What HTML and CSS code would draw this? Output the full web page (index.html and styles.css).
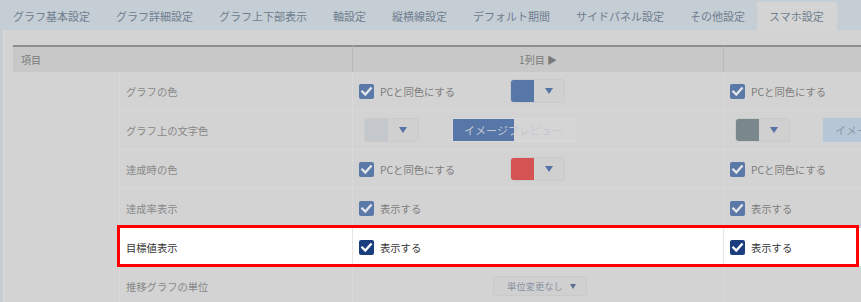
FILE: index.html
```html
<!DOCTYPE html>
<html lang="ja">
<head>
<meta charset="utf-8">
<link rel="stylesheet" href="styles.css">
</head>
<body>
<div class="tabs">
  <div class="tab">グラフ基本設定</div>
  <div class="tab">グラフ詳細設定</div>
  <div class="tab">グラフ上下部表示</div>
  <div class="tab">軸設定</div>
  <div class="tab">縦横線設定</div>
  <div class="tab">デフォルト期間</div>
  <div class="tab">サイドパネル設定</div>
  <div class="tab">その他設定</div>
  <div class="tab active">スマホ設定</div>
</div>
<div class="panel">
  <div class="tablewrap">
    <table class="grid">
      <colgroup><col class="c0"><col class="c1"><col class="c2"><col class="c3"></colgroup>
      <thead>
        <tr><th colspan="2" class="h-item">項目</th><th class="h-col">1列目 ▶</th><th class="h-col"></th></tr>
      </thead>
      <tbody>
        <tr>
          <td rowspan="6" class="blank"></td>
          <td class="label">グラフの色</td>
          <td><div class="pair"><span class="chkline"><span class="cb"><svg viewBox="0 0 15 15"><path d="M3.3 7.6 L6.3 10.6 L11.8 4.4"/></svg></span>PCと同色にする</span><span class="dd"><span class="sw sw-blue"></span><span class="arr"></span></span></div></td>
          <td><span class="chkline"><span class="cb"><svg viewBox="0 0 15 15"><path d="M3.3 7.6 L6.3 10.6 L11.8 4.4"/></svg></span>PCと同色にする</span></td>
        </tr>
        <tr>
          <td class="label">グラフ上の文字色</td>
          <td><div class="colorrow"><span class="dd"><span class="sw sw-light"></span><span class="arr"></span></span><span class="preview">イメージプレビュー</span></div></td>
          <td><div class="colorrow"><span class="dd"><span class="sw sw-dark"></span><span class="arr"></span></span><span class="preview preview-light">イメージプレビュー</span></div></td>
        </tr>
        <tr>
          <td class="label">達成時の色</td>
          <td><div class="pair"><span class="chkline"><span class="cb"><svg viewBox="0 0 15 15"><path d="M3.3 7.6 L6.3 10.6 L11.8 4.4"/></svg></span>PCと同色にする</span><span class="dd"><span class="sw sw-red"></span><span class="arr"></span></span></div></td>
          <td><span class="chkline"><span class="cb"><svg viewBox="0 0 15 15"><path d="M3.3 7.6 L6.3 10.6 L11.8 4.4"/></svg></span>PCと同色にする</span></td>
        </tr>
        <tr>
          <td class="label">達成率表示</td>
          <td><span class="chkline"><span class="cb"><svg viewBox="0 0 15 15"><path d="M3.3 7.6 L6.3 10.6 L11.8 4.4"/></svg></span>表示する</span></td>
          <td><span class="chkline"><span class="cb"><svg viewBox="0 0 15 15"><path d="M3.3 7.6 L6.3 10.6 L11.8 4.4"/></svg></span>表示する</span></td>
        </tr>
        <tr class="lit">
          <td class="label">目標値表示</td>
          <td><span class="chkline"><span class="cb"><svg viewBox="0 0 15 15"><path d="M3.3 7.6 L6.3 10.6 L11.8 4.4"/></svg></span>表示する</span></td>
          <td><span class="chkline"><span class="cb"><svg viewBox="0 0 15 15"><path d="M3.3 7.6 L6.3 10.6 L11.8 4.4"/></svg></span>表示する</span></td>
        </tr>
        <tr>
          <td class="label">推移グラフの単位</td>
          <td class="center"><span class="unit">単位変更なし<span class="arr-s"></span></span></td>
          <td></td>
        </tr>
      </tbody>
    </table>
    <div class="highlight"></div>
  </div>
</div>
</body>
</html>
```

FILE: styles.css
```css
html, body {
  margin: 0;
  padding: 0;
}
body {
  width: 861px;
  height: 302px;
  overflow: hidden;
  background: #c5cdd5;
  font-family: "Noto Sans CJK JP", "Noto Sans", sans-serif;
}
.tabs {
  display: flex;
  height: 30px;
  align-items: flex-end;
  background: #c5cdd5;
}
.tab {
  height: 28px;
  line-height: 28px;
  padding: 0 13px;
  font-size: 11px;
  color: #6e7e8f;
  white-space: nowrap;
  box-sizing: border-box;
}
.tab.active {
  background: #d4d4d4;
  margin-left: -1px;
  padding: 0 13px 0 12px;
  width: 80px;
}
.panel {
  margin-left: 3px;
  border-left: 1px solid #dcdcdc;
  background: #d3d3d3;
  padding: 15px 0 0 9px;
  height: 272px;
  box-sizing: border-box;
  overflow: hidden;
}
.tablewrap {
  position: relative;
  width: 1081px;
}
.grid {
  width: 1081px;
  table-layout: fixed;
  border-collapse: separate;
  border-spacing: 0;
  font-size: 10.3px;
  color: #7c7c7c;
}
.c0 { width: 106px; }
.c1 { width: 233px; }
.c2 { width: 371px; }
.c3 { width: 371px; }
thead th {
  height: 27px;
  box-sizing: border-box;
  border-top: 2px solid #8e8e8e;
  background: #c8c8c8;
  font-weight: normal;
  font-size: 10px;
  color: #7a7a7a;
  padding: 0;
}
.h-item {
  text-align: left;
  padding-left: 8px;
}
.h-col {
  text-align: center;
  border-left: 1px solid #b9b9b9;
}
tbody tr {
  height: 39px;
}
tbody td {
  border-bottom: 1px solid #d9d9d9;
  border-left: 1px solid #d9d9d9;
  padding: 0 6px;
  vertical-align: middle;
  white-space: nowrap;
  overflow: hidden;
}
tbody td.blank {
  border: none;
}
td.label {
  color: #888;
}
td.center {
  text-align: center;
}
.pair {
  display: flex;
  align-items: center;
}
.pair .chkline {
  width: 151px;
}
.chkline {
  display: inline-flex;
  align-items: center;
  gap: 6px;
  vertical-align: middle;
}
.cb {
  width: 15px;
  height: 15px;
  border-radius: 2px;
  background: #5a78a8;
  display: inline-block;
  flex: none;
}
.cb svg {
  display: block;
  width: 15px;
  height: 15px;
  fill: none;
  stroke: #e4e6ea;
  stroke-width: 2.3;
  stroke-linecap: square;
}
.dd {
  display: inline-flex;
  width: 55px;
  height: 24px;
  box-sizing: border-box;
  border: 1px solid #cacaca;
  border-radius: 3px;
  background: #d0d0d0;
  overflow: hidden;
}
.sw {
  width: 23px;
  height: 100%;
  border-radius: 2px 0 0 2px;
}
.sw-blue { background: #5677a8; }
.sw-light { background: #c4c8cc; }
.sw-dark { background: #7a878c; }
.sw-red { background: #d65353; }
.arr {
  flex: 1;
  display: flex;
  align-items: center;
  justify-content: center;
}
.arr::before {
  content: "";
  border-left: 4px solid transparent;
  border-right: 4px solid transparent;
  border-top: 6px solid #5573a5;
}
.colorrow {
  display: flex;
  align-items: center;
  gap: 33px;
  padding-left: 5px;
}
.preview {
  width: 123px;
  height: 24px;
  box-sizing: border-box;
  border: 1px solid #dadada;
  background: linear-gradient(90deg, #5677a8 0, #5677a8 61px, #d5d5d5 61px);
  font-size: 11px;
  line-height: 22px;
  text-align: center;
  color: #c4c9cf;
  flex: none;
}
.preview-light {
  background: #b6c6d7;
  border-color: #b6c6d7;
  color: #8c9aa8;
}
.unit {
  display: inline-flex;
  align-items: center;
  gap: 7px;
  height: 20px;
  box-sizing: border-box;
  padding: 0 10px 0 13px;
  border: 1px solid #cacaca;
  border-radius: 2px;
  background: #d0d0d0;
  font-size: 9.3px;
  color: #8893a0;
  margin-left: 4px;
}
.arr-s {
  border-left: 3.5px solid transparent;
  border-right: 3.5px solid transparent;
  border-top: 5px solid #5b6f96;
}
tr.lit td.label,
tr.lit td:not(.blank) {
  background: #fff;
  color: #333;
  border-left-color: #e6e6e6;
}
tr.lit .cb {
  background: #1b3e7e;
}
tr.lit .cb svg {
  stroke: #fff;
}
.highlight {
  position: absolute;
  left: 104px;
  top: 180px;
  width: 742px;
  height: 42px;
  box-sizing: border-box;
  border: 3px solid #ff0000;
  pointer-events: none;
}
```
